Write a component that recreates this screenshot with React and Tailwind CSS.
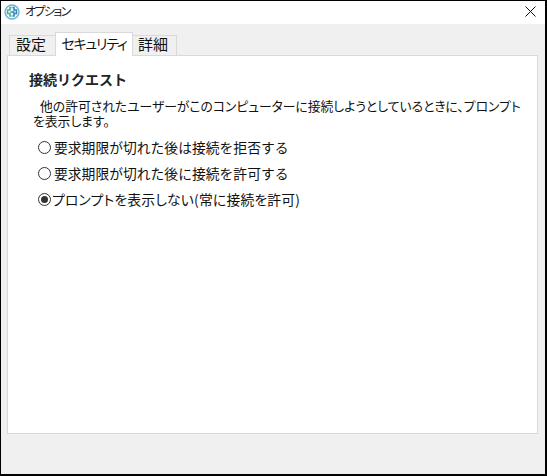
const font = "font-['Noto_Sans_CJK_JP',sans-serif]";

function Radio({ checked, label, tight }) {
  return (
    <label className="flex items-center h-[26px]">
      <span className="w-[13px] h-[13px] rounded-full border border-[#333] bg-white flex items-center justify-center shrink-0">
        {checked && <span className="w-[7px] h-[7px] rounded-full bg-[#333]" />}
      </span>
      <span className={`${tight ? 'ml-[1px] tracking-[0.2px] [font-feature-settings:"palt"]' : 'ml-[3px]'} text-[13.8px] leading-[20px] text-[#111] whitespace-nowrap`}>{label}</span>
    </label>
  );
}

export default function App() {
  return (
    <div className={`${font} w-[547px] h-[476px] border border-black border-r-2 border-b-2 bg-[#f0f0f0] flex flex-col overflow-hidden`}>
      <div className="h-[23px] bg-white flex items-center shrink-0">
        <svg className="ml-[3px] -mt-[2px]" width="16" height="16" viewBox="0 0 16 16">
          <circle cx="8" cy="8" r="7" fill="#eef7fb" stroke="#6bb3d6" strokeWidth="1.4" />
          <path d="M7.5 3.5H6V6H3.5V9.5H6V12H7.5" fill="none" stroke="#45b58c" strokeWidth="1.5" />
          <path d="M6.5 8H10.5M8.5 3.5H10V6H12.5V9.5H10V12H8.5" fill="none" stroke="#2f86bd" strokeWidth="1.5" />
        </svg>
        <span className='ml-[5px] -mt-[4px] text-[12px] leading-none text-[#222] tracking-[-1.6px] [font-feature-settings:"palt"]'>オプション</span>
        <svg className="ml-auto mr-[9px] -mt-[2px]" width="11" height="11" viewBox="0 0 11 11">
          <path d="M0.5 0.5l10 10M10.5 0.5l-10 10" stroke="#111" strokeWidth="1" />
        </svg>
      </div>

      <div className="flex-1 flex flex-col pl-[6px] pr-[7px] pt-[8px] pb-[40px] min-h-0">
        <div className="flex items-end h-[24px] pl-[2px] text-[15px] text-[#111] relative z-10">
          <div className="w-[47px] h-[21px] pb-[3px] pr-[3px] border border-b-0 border-[#d9d9d9] flex items-center justify-center">設定</div>
          <div className='w-[78px] h-[24px] pb-[3px] -mx-px bg-white border border-b-0 border-[#d9d9d9] flex items-center justify-center relative z-10 whitespace-nowrap text-[14px] tracking-[-1.2px] [font-feature-settings:"palt"]'>セキュリティ</div>
          <div className="w-[45px] h-[21px] pb-[3px] pr-[3px] border border-b-0 border-[#d9d9d9] flex items-center justify-center">詳細</div>
        </div>
        <div className="flex-1 bg-white border border-[#d9d9d9] -mt-px pl-[21px] pr-[12px] pt-[13px]">
          <h2 className="text-[14px] leading-[20px] font-bold text-[#222]">接続リクエスト</h2>
          <p className='mt-[9px] pl-[4px] text-[12.8px] leading-[15px] text-[#111] indent-[7px] whitespace-nowrap [font-feature-settings:"palt"]'>
            他の許可されたユーザーがこのコンピューターに接続しようとしているときに、プロンプト<br />を表示します。
          </p>
          <div className="mt-[6px] pl-[9px] flex flex-col">
            <Radio label="要求期限が切れた後は接続を拒否する" />
            <Radio label="要求期限が切れた後に接続を許可する" />
            <Radio checked tight label="プロンプトを表示しない(常に接続を許可)" />
          </div>
        </div>
      </div>
    </div>
  );
}
